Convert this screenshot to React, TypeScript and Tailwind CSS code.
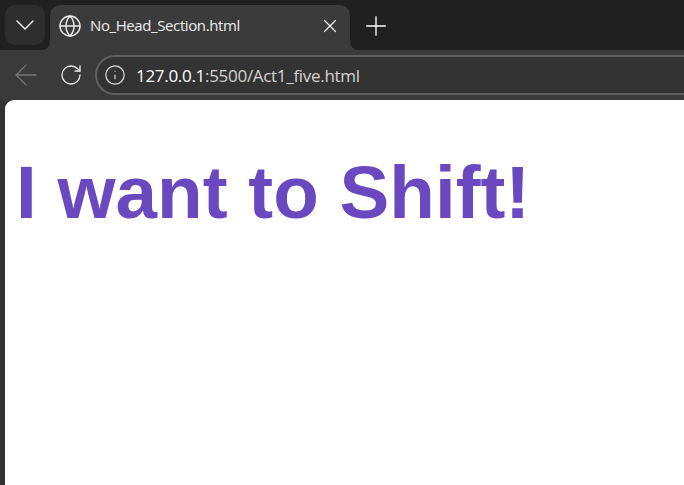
import { ArrowLeft, ChevronDown, Globe, Info, Plus, RotateCw, X } from 'lucide-react';

export default function App() {
  return (
    <div className="w-[684px] h-[485px] overflow-hidden flex flex-col bg-[#333333] font-['Open_Sans','Noto_Sans',sans-serif]">
      {/* Tab strip */}
      <div className="h-[50px] bg-[#202020] flex items-start pt-[5px] pl-[5px]">
        <button className="w-[40px] h-[40px] rounded-[10px] bg-[#2e2e2e] flex items-center justify-center text-[#f0f0f0]">
          <ChevronDown size={32} strokeWidth={1.1} />
        </button>
        <div className="relative ml-[5px] w-[300px] h-[45px] rounded-t-[10px] bg-[#3b3b3b] flex items-center pb-[4px] pl-[10px] pr-[9px] text-[#eeeeee]">
          {/* concave corners at the foot of the tab */}
          <div className="absolute left-[-8px] bottom-0 w-[8px] h-[8px] bg-[#3b3b3b]">
            <div className="w-full h-full bg-[#202020] rounded-br-[8px]" />
          </div>
          <div className="absolute right-[-8px] bottom-0 w-[8px] h-[8px] bg-[#3b3b3b]">
            <div className="w-full h-full bg-[#202020] rounded-bl-[8px]" />
          </div>
          <Globe size={24} strokeWidth={1.4} className="-ml-[2px]" />
          <span className="ml-[8px] flex-1 text-[15px] leading-none tracking-[-0.4px]">No_Head_Section.html</span>
          <X size={22} strokeWidth={1.3} />
        </div>
        <button className="ml-[10px] mt-[5px] text-white">
          <Plus size={32} strokeWidth={1} />
        </button>
      </div>
      {/* Toolbar */}
      <div className="h-[50px] bg-[#3a3a3a] flex items-center pl-[9px]">
        <ArrowLeft size={34} strokeWidth={0.9} className="text-[#777777]" />
        <RotateCw size={24} strokeWidth={1.3} className="ml-[16px] text-[#eeeeee]" />
        <div className="ml-[12px] flex-1 h-[40px] rounded-l-[20px] border-y-2 border-l-2 border-[#5f5f5f] bg-[#333333] flex items-center pl-[7px]">
          <Info size={22} strokeWidth={1.3} className="text-[#dddddd]" />
          <span className="ml-[10px] text-[17px] leading-none tracking-[-0.3px]">
            <span className="text-white">127.0.0.1</span>
            <span className="text-[#d4d4d4]">:5500/Act1_five.html</span>
          </span>
        </div>
      </div>
      {/* Page */}
      <div className="flex-1 ml-[5px] bg-white rounded-tl-[9px] pl-[11px] pt-[49px]">
        <h1 className="font-['Liberation_Sans',Arial,sans-serif] font-bold text-[74.67px] leading-[86px] text-[#6a48c0]">I want to Shift!</h1>
      </div>
    </div>
  );
}
